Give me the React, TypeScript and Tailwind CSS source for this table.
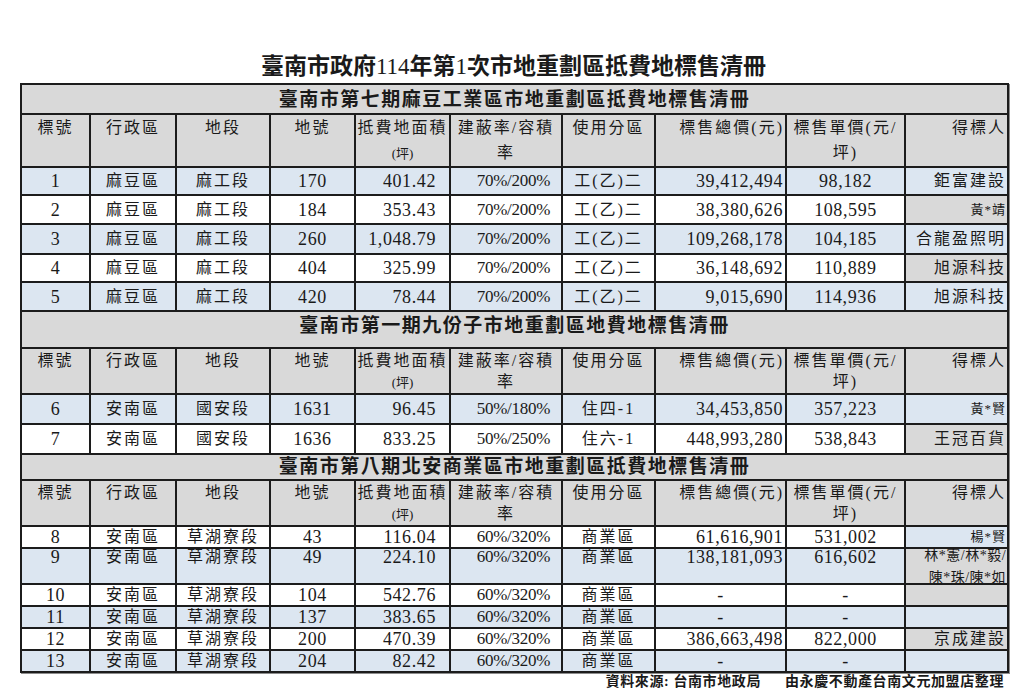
import React from "react";

type Bg = "blue" | "white" | "gray";
type Kind = "mid" | "low" | "tall";

interface Lot {
  no: string;
  dist: string;
  sec: string;
  lot: string;
  area: string;
  ratio: string;
  zone: string;
  total: string;
  unit: string;
  winner: string[];
  rowBg: Bg;
  winBg: Bg;
  small?: boolean;
  kind: Kind;
  h: string;
}

const SERIF = "font-['Liberation_Serif','Noto_Sans_CJK_TC',serif]";

const bgClass: Record<Bg, string> = {
  blue: "bg-[#dce6f1]",
  white: "bg-white",
  gray: "bg-[#d9d9d9]",
};

const textPos: Record<Kind, string> = {
  mid: "align-middle leading-[20px]",
  low: "align-top pt-[4px] leading-[12px]",
  tall: "align-top pt-[2px] leading-[12px]",
};

const cell = "border-2 border-[#1c1c1c] p-0 whitespace-nowrap overflow-visible";
const num = "text-[18px] tracking-[0.6px]";
const cjk = "text-[16px] tracking-[2px]";

const sections: { title: string; tall: boolean; rows: Lot[] }[] = [
  {
    title: "臺南市第七期麻豆工業區市地重劃區抵費地標售清冊",
    tall: true,
    rows: [
      { no: "1", dist: "麻豆區", sec: "麻工段", lot: "170", area: "401.42", ratio: "70%/200%", zone: "工(乙)二", total: "39,412,494", unit: "98,182", winner: ["鉅富建設"], rowBg: "blue", winBg: "blue", kind: "mid", h: "h-[28px]" },
      { no: "2", dist: "麻豆區", sec: "麻工段", lot: "184", area: "353.43", ratio: "70%/200%", zone: "工(乙)二", total: "38,380,626", unit: "108,595", winner: ["黃*靖"], rowBg: "white", winBg: "gray", small: true, kind: "mid", h: "h-[29px]" },
      { no: "3", dist: "麻豆區", sec: "麻工段", lot: "260", area: "1,048.79", ratio: "70%/200%", zone: "工(乙)二", total: "109,268,178", unit: "104,185", winner: ["合龍盈照明"], rowBg: "blue", winBg: "blue", kind: "mid", h: "h-[30px]" },
      { no: "4", dist: "麻豆區", sec: "麻工段", lot: "404", area: "325.99", ratio: "70%/200%", zone: "工(乙)二", total: "36,148,692", unit: "110,889", winner: ["旭源科技"], rowBg: "white", winBg: "gray", kind: "mid", h: "h-[28px]" },
      { no: "5", dist: "麻豆區", sec: "麻工段", lot: "420", area: "78.44", ratio: "70%/200%", zone: "工(乙)二", total: "9,015,690", unit: "114,936", winner: ["旭源科技"], rowBg: "blue", winBg: "blue", kind: "mid", h: "h-[29px]" },
    ],
  },
  {
    title: "臺南市第一期九份子市地重劃區地費地標售清冊",
    tall: false,
    rows: [
      { no: "6", dist: "安南區", sec: "國安段", lot: "1631", area: "96.45", ratio: "50%/180%", zone: "住四-1", total: "34,453,850", unit: "357,223", winner: ["黃*賢"], rowBg: "blue", winBg: "blue", small: true, kind: "mid", h: "h-[30px]" },
      { no: "7", dist: "安南區", sec: "國安段", lot: "1636", area: "833.25", ratio: "50%/250%", zone: "住六-1", total: "448,993,280", unit: "538,843", winner: ["王冠百貨"], rowBg: "white", winBg: "gray", kind: "mid", h: "h-[30px]" },
    ],
  },
  {
    title: "臺南市第八期北安商業區市地重劃區抵費地標售清冊",
    tall: false,
    rows: [
      { no: "8", dist: "安南區", sec: "草湖寮段", lot: "43", area: "116.04", ratio: "60%/320%", zone: "商業區", total: "61,616,901", unit: "531,002", winner: ["楊*賢"], rowBg: "white", winBg: "blue", small: true, kind: "low", h: "h-[22px]" },
      { no: "9", dist: "安南區", sec: "草湖寮段", lot: "49", area: "224.10", ratio: "60%/320%", zone: "商業區", total: "138,181,093", unit: "616,602", winner: ["林*憲/林*毅/", "陳*珠/陳*如"], rowBg: "blue", winBg: "gray", kind: "tall", h: "h-[36px]" },
      { no: "10", dist: "安南區", sec: "草湖寮段", lot: "104", area: "542.76", ratio: "60%/320%", zone: "商業區", total: "-", unit: "-", winner: [], rowBg: "white", winBg: "gray", kind: "low", h: "h-[22px]" },
      { no: "11", dist: "安南區", sec: "草湖寮段", lot: "137", area: "383.65", ratio: "60%/320%", zone: "商業區", total: "-", unit: "-", winner: [], rowBg: "blue", winBg: "blue", kind: "low", h: "h-[22px]" },
      { no: "12", dist: "安南區", sec: "草湖寮段", lot: "200", area: "470.39", ratio: "60%/320%", zone: "商業區", total: "386,663,498", unit: "822,000", winner: ["京成建設"], rowBg: "white", winBg: "gray", kind: "low", h: "h-[22px]" },
      { no: "13", dist: "安南區", sec: "草湖寮段", lot: "204", area: "82.42", ratio: "60%/320%", zone: "商業區", total: "-", unit: "-", winner: [], rowBg: "blue", winBg: "blue", kind: "low", h: "h-[22px]" },
    ],
  },
];

// row height + where the title text sits in it
const sectionStyle = [
  { h: "h-[30px]", pos: "pt-[3px] leading-[24px]" },
  { h: "h-[37px]", pos: "pt-[2px] leading-[24px]" },
  { h: "h-[26px]", pos: "pt-[1px] leading-[22px]" },
];

function SectionTitle({ title, idx }: { title: string; idx: number }) {
  const st = sectionStyle[idx];
  return (
    <tr className={st.h}>
      <td colSpan={10} className={`${cell} ${st.pos} align-top bg-[#d9d9d9] text-center text-[19px] font-bold tracking-[1.5px]`}>
        {title}
      </td>
    </tr>
  );
}

function HeaderRow({ tall }: { tall: boolean }) {
  const pos = tall ? "align-top pt-0 leading-[25px]" : "align-top pt-[1px] leading-[21px]";
  const c = `${cell} ${pos} ${cjk} bg-[#d9d9d9]`;
  return (
    <tr className={tall ? "h-[53px]" : "h-[46px]"}>
      <td className={`${c} text-center`}>標號</td>
      <td className={`${c} text-center`}>行政區</td>
      <td className={`${c} text-center`}>地段</td>
      <td className={`${c} text-center`}>地號</td>
      <td className={`${c} text-center`}>
        抵費地面積
        <br />
        <span className="text-[13px] tracking-normal">(坪)</span>
      </td>
      <td className={`${c} text-center`}>
        建蔽率/容積
        <br />率
      </td>
      <td className={`${c} text-center`}>使用分區</td>
      <td className={`${c} text-right pr-[1px]`}>標售總價(元)</td>
      <td className={`${c} text-center`}>
        標售單價(元/
        <br />坪)
      </td>
      <td className={`${c} text-right pr-[1px]`}>得標人</td>
    </tr>
  );
}

function LotRow({ r }: { r: Lot }) {
  const base = `${cell} ${textPos[r.kind]}`;
  const bg = bgClass[r.rowBg];
  return (
    <tr className={r.h}>
      <td className={`${base} ${bg} ${num} text-center`}>{r.no}</td>
      <td className={`${base} ${bg} ${cjk} text-center`}>{r.dist}</td>
      <td className={`${base} ${bg} ${cjk} text-center`}>{r.sec}</td>
      <td className={`${base} ${bg} ${num} text-center`}>{r.lot}</td>
      <td className={`${base} ${bg} ${num} text-right pr-[13px]`}>{r.area}</td>
      <td className={`${base} ${bg} text-[17px] tracking-[-0.3px] text-right pr-[11px]`}>{r.ratio}</td>
      <td className={`${base} ${bg} ${cjk} text-center`}>{r.zone}</td>
      <td className={`${base} ${bg} ${num} ${r.total === "-" ? "text-center" : "text-right pr-[2px]"}`}>{r.total}</td>
      <td className={`${base} ${bg} ${num} text-center`}>{r.unit}</td>
      {r.kind === "tall" ? (
        <td className={`${cell} align-top ${bgClass[r.winBg]} text-right pr-[1px]`}>
          <div className="h-[34px] -mt-[4px] text-[14px] leading-[22px] tracking-[0.5px]">
            {r.winner.map((w) => (
              <div key={w}>{w}</div>
            ))}
          </div>
        </td>
      ) : (
        <td
          className={`${base} ${bgClass[r.winBg]} text-right pr-[1px] ${
            r.small ? "text-[13px] tracking-[1px]" : cjk
          }`}
        >
          {r.winner.join("")}
        </td>
      )}
    </tr>
  );
}

export default function App() {
  return (
    <div className={`w-[1024px] h-[700px] bg-white text-[#1a1a1a] ${SERIF}`}>
      <div className="ml-[20px] w-[987px] pt-[51px] h-[83px] text-center text-[23px] leading-[32px] font-bold">
        臺南市政府<span className="font-normal">114</span>年第<span className="font-normal">1</span>次市地重劃區抵費地標售清冊
      </div>
      <div className="ml-[20px]">
        <table className="table-fixed border-collapse w-[987px] shadow-[1px_1px_0_#8c8c8c]">
          <colgroup>
            <col className="w-[69px]" />
            <col className="w-[86px]" />
            <col className="w-[94px]" />
            <col className="w-[85px]" />
            <col className="w-[95px]" />
            <col className="w-[112px]" />
            <col className="w-[93px]" />
            <col className="w-[131px]" />
            <col className="w-[119px]" />
            <col className="w-[103px]" />
          </colgroup>
          <tbody>
            {sections.map((s, i) => (
              <React.Fragment key={s.title}>
                <SectionTitle title={s.title} idx={i} />
                <HeaderRow tall={s.tall} />
                {s.rows.map((r) => (
                  <LotRow key={r.no} r={r} />
                ))}
              </React.Fragment>
            ))}
          </tbody>
        </table>
      </div>
      <div className="ml-[20px] w-[984px] text-right text-[14px] leading-[18px] font-bold tracking-[0.6px]">
        <span className="mr-[24px]">資料來源: 台南市地政局</span>
        <span>由永慶不動產台南文元加盟店整理</span>
      </div>
    </div>
  );
}
